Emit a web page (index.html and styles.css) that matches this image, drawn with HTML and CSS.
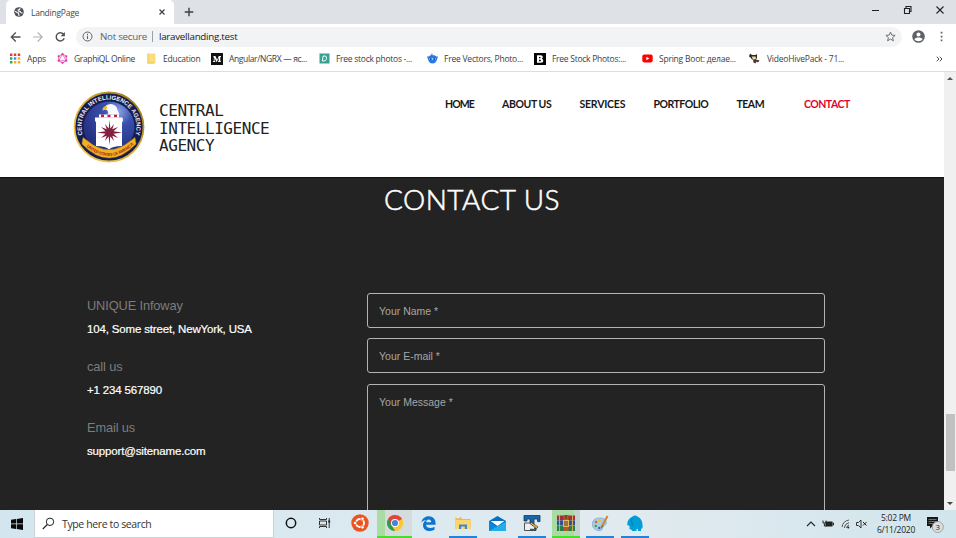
FILE: index.html
```html
<!DOCTYPE html>
<html lang="en">
<head>
<meta charset="utf-8">
<title>LandingPage</title>
<link rel="stylesheet" href="styles.css">
</head>
<body>
<div class="desktop">
  <div class="tabstrip">
    <div class="tab">
      <svg class="globe" width="10" height="10" viewBox="0 0 10 10"><circle cx="5" cy="5" r="4.8" fill="#4d5258"/><path d="M1.2 4.2 3 5.4 4.6 6v1.300L5.200 8.900 M6 1.200 5.600 2.600 4 3.100 4.400 4.100 6.200 4.400 7 5.800 8.700 6" fill="none" stroke="#fff" stroke-width="1.100"/></svg>
      <span class="tab-title">LandingPage</span>
      <svg class="tab-close" width="6" height="6" viewBox="0 0 6 6"><path d="M.5.5l5 5M5.500.500l-5 5" stroke="#3c4043" stroke-width="1.200"/></svg>
    </div>
    <svg class="newtab" width="10" height="10" viewBox="0 0 10 10"><path d="M5 .700v8.600M.700 5h8.600" stroke="#3c4043" stroke-width="1.400"/></svg>
    <svg class="winbtns" width="72" height="12" viewBox="0 0 72 12"><path d="M0 6.500h7" stroke="#222"/><path d="M32.500 4.500h5v5h-5zM34 4v-1.500h5v5h-1.500" fill="none" stroke="#222" stroke-width="1.100"/><path d="M64.500 2.500l7 7M71.500 2.500l-7 7" stroke="#222" stroke-width="1.100"/></svg>
  </div>
  <div class="toolbar">
    <svg class="navicons" width="60" height="12" viewBox="0 0 60 12"><path d="M10.500 6H1.500M5.800 1.500 1.300 6l4.500 4.500" fill="none" stroke="#4d5156" stroke-width="1.300"/><path d="M23 6h9M27.700 1.500 32.200 6l-4.500 4.500" fill="none" stroke="#aeb1b5" stroke-width="1.100"/><path d="M53.500 3.200A4.100 4.100 0 1 0 54.200 7.200" fill="none" stroke="#4d5156" stroke-width="1.400"/><path d="M54.900 1v4.300h-4.300z" fill="#4d5156"/></svg>
    <div class="address">
      <svg width="11" height="11" viewBox="0 0 11 11"><circle cx="5.500" cy="5.500" r="4.500" fill="none" stroke="#5f6368"/><path d="M5.500 4.700v3.300M5.500 2.800v1.100" stroke="#5f6368" stroke-width="1.100"/></svg>
      <span class="notsecure">Not secure</span><span class="sep"></span><span class="url">laravellanding.test</span>
      <svg class="star" width="11" height="11" viewBox="0 0 11 11"><path d="M5.500 1.100 6.800 4.100l3.300.300-2.500 2.200.800 3.200-2.900-1.700-2.900 1.700.800-3.200L.900 4.400l3.300-.300z" fill="none" stroke="#5f6368" stroke-width=".9"/></svg>
    </div>
    <svg class="profile" width="13" height="13" viewBox="0 0 13 13"><circle cx="6.500" cy="6.500" r="6.300" fill="#5f6368"/><circle cx="6.500" cy="4.400" r="2" fill="#fff"/><path d="M2.500 9.500c.8-2.600 7.200-2.600 8 0-1.800 2.200-6.200 2.200-8 0z" fill="#fff"/></svg>
    <svg class="dots" width="3" height="11" viewBox="0 0 3 11"><path d="M.700.800h1.700v1.700H.700zM.700 4.700h1.700v1.700H.700zM.700 8.600h1.700v1.700H.700z" fill="#5f6368"/></svg>
  </div>
  <div class="bookmarks">
    <span class="bm apps"><svg width="11" height="11" viewBox="0 0 11 11"><path d="M0 .500h2.400v2.400H0zM3.900.500h2.400v2.400H3.900zM7.800.500h2.400v2.400H7.800z" fill="#e33b2e"/><path d="M0 4.300h2.400v2.400H0zM0 8.100h2.400v2.400H0z" fill="#2da94f"/><path d="M3.900 4.300h2.400v2.400H3.900z" fill="#4285f4"/><path d="M3.900 8.100h2.400v2.400H3.900zM7.800 4.300h2.400v2.400H7.800zM7.800 8.100h2.400v2.400H7.800z" fill="#f5ae16"/></svg><b>Apps</b></span>
    <span class="bm graph"><svg width="11" height="11" viewBox="0 0 11 11"><path d="M5.500 1 9.300 3.200v4.600L5.500 10 1.700 7.800V3.200zM5.500 1 9.300 7.800H1.700z" fill="none" stroke="#e44bb0" stroke-width=".8"/><g fill="#e535ab"><circle cx="5.500" cy="1.200" r="1.100"/><circle cx="9.300" cy="3.300" r="1.100"/><circle cx="9.300" cy="7.700" r="1.100"/><circle cx="5.500" cy="9.800" r="1.100"/><circle cx="1.700" cy="7.700" r="1.100"/><circle cx="1.700" cy="3.300" r="1.100"/></g></svg><b>GraphiQL Online</b></span>
    <span class="bm edu"><svg width="11" height="11" viewBox="0 0 11 11"><path d="M1.500.500h8v10h-8z" fill="#fbdc7b"/><path d="M1.500.500v10h6.500v-1h-5.700v-9z" fill="#eac35b"/></svg><b>Education</b></span>
    <span class="bm ang"><svg width="12" height="12" viewBox="0 0 12 12"><path d="M0 0h12v12H0z" fill="#111"/><path d="M2.200 3h2.200L6.100 6.800 7.800 3h2.200v.700l-.700.600v3.600l.700.600V9H7v-.500l.700-.600V4.800L5.800 9h-.300L3.500 4.900v2.800l.900.900V9H1.900v-.400l.900-.900V4.200z" fill="#fff"/></svg><b>Angular/NGRX — яс...</b></span>
    <span class="bm stock"><svg width="11" height="11" viewBox="0 0 11 11"><rect x=".5" y=".5" width="10" height="10" fill="#35a292"/><path d="M4.200 3h1.800q2 .200 1.500 2.600T5 8H3.300z" fill="none" stroke="#fff" stroke-width="1"/></svg><b>Free stock photos -...</b></span>
    <span class="bm vec"><svg width="11" height="11" viewBox="0 0 11 11"><path d="M5 0l.700 2.200C7.500 2 8.700 2.600 9.200 3.500L11 3.500 9.800 7C9 9.500 7.500 10.500 5.500 10.500S2 9.500 1.200 7L0 3.500l1.800 0Q2.600 2.300 4 2.200z" fill="#2878e8"/><path d="M2.400 5.200h6.200v1.400H2.400z" fill="#d7edff"/><circle cx="3.800" cy="6" r=".9" fill="#123f90"/><circle cx="7.200" cy="6" r=".9" fill="#123f90"/></svg><b>Free Vectors, Photo...</b></span>
    <span class="bm bb"><svg width="12" height="12" viewBox="0 0 12 12"><path d="M0 0h12v12H0z" fill="#050505"/><path fill-rule="evenodd" d="M3 2.200h3.800q2 .100 2 1.800 0 1.200-1 1.700 1.500.500 1.500 2Q9.300 9.700 7 9.800H3zM5 3.900v1.300h1.300q.700-.600 0-1.300zM5 6.700v1.500h1.600q.800-.800 0-1.500z" fill="#fff"/></svg><b>Free Stock Photos:...</b></span>
    <span class="bm spring"><svg width="11" height="11" viewBox="0 0 11 11"><rect x=".3" y="1.600" width="10.400" height="7.800" rx="1.800" fill="#f00"/><path d="M4.300 3.700 7.300 5.500l-3 1.800z" fill="#fff"/></svg><b>Spring Boot: делае...</b></span>
    <span class="bm hive"><svg width="11" height="11" viewBox="0 0 11 11"><path d="M1 .500 3 2h3.500L8 1v4L6.500 7 3 6.500 1.500 4.500 0 3.500z" fill="#33271f"/><path d="M2.700 3.600 6.700 3.400 6.900 6 4 6.500z" fill="#efd7aa"/><path d="M4 7l3-.500L10.500 7.500 9 9.500 7.500 8.500 6.500 10.500 4.500 9.500z" fill="#49382a"/></svg><b>VideoHivePack - 71...</b></span>
    <svg class="more" width="7" height="6" viewBox="0 0 7 6"><path d="M.7.700 3 3 .700 5.300M3.700.700 6 3 3.700 5.300" fill="none" stroke="#4b4f54" stroke-width="1"/></svg>
  </div>

  <div class="viewport">
    <div class="page">
      <header class="site-header">
        <svg class="seal" width="72" height="72" viewBox="0 0 72 72">
          <defs><radialGradient id="blue" cx=".68" cy=".2" r=".8"><stop stop-color="#8fa3e6"/><stop offset=".35" stop-color="#3a50ad"/><stop offset="1" stop-color="#222e7d"/></radialGradient>
          <linearGradient id="gold" x1="1" y1="0" x2="0" y2="1"><stop stop-color="#8b6f1d"/><stop offset=".5" stop-color="#e0af36"/><stop offset="1" stop-color="#f8cf56"/></linearGradient>
          <path id="arc" d="M11.500 48.500A27.500 27.500 0 1 1 60.500 48.500"/><path id="low" d="M12 54Q36 76 60 54"/></defs>
          <circle cx="36" cy="36" r="34.500" fill="#151d50" stroke="url(#gold)" stroke-width="1.800"/>
          <circle cx="36" cy="36" r="25.500" fill="url(#blue)"/>
          <text class="seal-text"><textPath href="#arc" textLength="102" startOffset="5">CENTRAL INTELLIGENCE AGENCY</textPath></text>
          <path d="M22 26.500h27.500l.5 3-1 2V55q-10 .400-13 3.500-3-3.100-13-3.500V31.500l-1-2z" fill="#fff"/>
          <path d="M26 23.500h20v3H26z" fill="#fff"/><path d="M28 23.500h3v2.500h-3zM34.500 23.500h3v2.500h-3zM41 23.500h3v2.500h-3z" fill="#c12032"/>
          <path d="M31 18q1.500-4.800 6.500-5 6 .500 7 6l2 4.500H34q2-2 .500-4-2.500-2-5 .500z" fill="#f7f9ff"/><path d="M29.500 18.500q.5-3.300 4-3.700l1 3.200q-3-.8-4.500 1.800z" fill="#edbd25"/>
          <path d="M36.500 29 37.300 37.500 41 33 39.300 38.300 45 36 40.500 40.200 49 41.500 40.500 42.800 45 47 39.300 44.700 41 50 37.300 45.500 36.500 54 35.700 45.500 32 50 33.700 44.700 28 47 32.500 42.800 24 41.500 32.500 40.200 28 36 33.700 38.300 32 33 35.700 37.500z" fill="#84203f"/>
          <path d="M10 46.500 14 49.500Q36 68 58 49.500l4-3 1 6.500Q36 81 9 53z" fill="#efb322" stroke="#c7801b" stroke-width=".5"/>
          <text class="ribbon"><textPath href="#low" startOffset="2" textLength="53">UNITED STATES OF AMERICA</textPath></text>
        </svg>
        <div class="agency"><span>CENTRAL</span><span>INTELLIGENCE</span><span>AGENCY</span></div>
        <nav class="menu"><a class="m1">HOME</a><a class="m2">ABOUT US</a><a class="m3">SERVICES</a><a class="m4">PORTFOLIO</a><a class="m5">TEAM</a><a class="m6">CONTACT</a></nav>
      </header>
      <main class="contact">
        <h1>CONTACT US</h1>
        <div class="columns">
          <dl class="details">
            <dt>UNIQUE Infoway</dt><dd>104, Some street, NewYork, USA</dd>
            <dt>call us</dt><dd>+1 234 567890</dd>
            <dt>Email us</dt><dd>support@sitename.com</dd>
          </dl>
          <form class="form"><div class="field">Your Name *</div><div class="field">Your E-mail *</div><div class="field message">Your Message *</div></form>
        </div>
      </main>
    </div>
    <div class="scrollbar"><i class="up"></i><div class="thumb"></div><i class="down"></i></div>
  </div>

  <footer class="taskbar">
    <div class="start"><svg width="12" height="12" viewBox="0 0 12 12"><path d="M0 1.700 5 1v4.600H0zM5.700.900 12 0v5.600H5.700zM0 6.300h5V11L0 10.300zM5.700 6.300H12V12l-6.300-.9z" fill="#080808"/></svg></div>
    <div class="search"><svg width="13" height="13" viewBox="0 0 13 13"><circle cx="8" cy="4.800" r="3.700" fill="none" stroke="#222"/><path d="M5.300 7.500.800 12" stroke="#222" stroke-width="1.100"/></svg><span>Type here to search</span></div>
    <div class="slot"><svg width="12" height="12" viewBox="0 0 12 12"><circle cx="6" cy="6" r="4.700" fill="none" stroke="#111" stroke-width="1.500"/></svg></div>
    <div class="slot"><svg width="12" height="12" viewBox="0 0 12 12"><path d="M.500 1v1.500h7V1M.500 11V9.500h7V11M.500 4h7v4h-7zM10.200 1v10" fill="none" stroke="#333"/><path d="M9.200 3.500h2v2h-2z" fill="#222"/></svg></div>
    <div class="slot ubuntu"><svg width="18" height="18" viewBox="0 0 18 18"><circle cx="9" cy="9" r="8.700" fill="#e95420"/><circle cx="9" cy="9" r="4" fill="none" stroke="#fff" stroke-width="1.900"/><g fill="#fff" stroke="#e95420" stroke-width=".8"><circle cx="4.100" cy="9" r="1.700"/><circle cx="11.500" cy="4.700" r="1.700"/><circle cx="11.500" cy="13.300" r="1.700"/></g></svg></div>
    <div class="slot active chrome"><svg width="16" height="16" viewBox="0 0 16 16"><path d="M8 8 1.070 4A8 8 0 0 1 14.930 4z" fill="#e34435"/><path d="M8 8 14.930 4A8 8 0 0 1 8 16z" fill="#f8c72d"/><path d="M8 8v8A8 8 0 0 1 1.070 4z" fill="#2c9c52"/><path d="M8 4h6.930L15.500 5.500 11.500 10 8 16 4.500 10z" fill="#f8c72d"/><path d="M8 8 4.500 10 1.070 4 8 4h7L11.500 6z" fill="#e34435"/><circle cx="8" cy="8" r="4" fill="#fff"/><circle cx="8" cy="8" r="3.100" fill="#4285db"/></svg></div>
    <div class="slot"><svg width="15" height="15" viewBox="0 0 15 15"><path d="M.300 6.800C1 2.500 4 .200 7.800.200c4.200 0 6.800 3 6.800 7v1.500H5c.3 3.500 5 4.200 8.500 2v3C8 16.500 2 14.500 2 9.200c0-2.600 1.500-4.300 3.500-5.100C3.200 4.200 1.500 5.200.300 6.800zM5.100 6.200h5.100c0-3.900-4.800-3.600-5.100 0z" fill="#0c76cf"/></svg></div>
    <div class="slot run"><svg width="16" height="14" viewBox="0 0 16 14"><path d="M.500 1h5l1.500 2h8.500v10H.500z" fill="#efb943"/><path d="M1 4h14.500v9H1z" fill="#fcd66e"/><path d="M4 13V8.500h8V13H9.800v-2.500H6.200V13z" fill="#3989d4"/><path d="M1.500 1.700h3" stroke="#fff"/></svg></div>
    <div class="slot"><svg width="17" height="15" viewBox="0 0 17 15"><path d="M0 5 8.500 0 17 5v10H0z" fill="#0870c3"/><path d="M0 5.500 8.500 11 0 15z" fill="#0b86dc"/><path d="M17 5.500V15H0z" fill="#23aeea"/><path d="M1.500 5h14L8.500 10z" fill="#fff"/></svg></div>
    <div class="slot run"><svg width="18" height="17" viewBox="0 0 18 17"><path d="M1 .500h16v6h-2.500V4H11v9h2v2.500H5V13h2V4H4v2H1z" fill="#1767aa" stroke="#183652" stroke-width=".8"/><path d="M1.500 8h5l6 4-2 2.500-3-.500v1.500h-6z" fill="#eee" stroke="#444" stroke-width=".9"/><path d="M8 7l7 5-1.500 1.700L7 8.500z" fill="#efad4c" stroke="#222" stroke-width=".6"/></svg></div>
    <div class="slot active rar"><svg width="18" height="16" viewBox="0 0 18 16"><path d="M0 .500h18V5H0z" fill="#a52b39"/><path d="M0 5.300h18v5H0z" fill="#31509b"/><path d="M0 10.700h18V16H0z" fill="#267d49"/><path d="M2.500 0v16M15.500 0v16" stroke="#d2aa55" stroke-width="1.100"/><path d="M6.500 0h5v16h-5z" fill="#ae5c2a"/><path d="M6 5h6v7H6z" fill="#edb45b"/><path d="M8 6v5M10 6v5M9 0v4" stroke="#433" stroke-width="1"/></svg></div>
    <div class="slot run"><svg width="17" height="17" viewBox="0 0 17 17"><path d="M8 3C3 2.500 0 6 .300 9.500c.4 4.600 4.700 6.500 8 6 3-.5 1.200-3 3.300-4.300C14 10 15 8.500 14 6c-.8-2-3-3-6-3z" fill="#a8cce4" stroke="#739bb8" stroke-width=".6"/><circle cx="4" cy="7" r="1.300" fill="#e35d43"/><circle cx="3.800" cy="11" r="1.300" fill="#4c9e53"/><circle cx="7.500" cy="5.200" r="1.300" fill="#f0c13e"/><circle cx="7.200" cy="13" r="1.200" fill="#3766b6"/><path d="M15.500 1 9 13" stroke="#c98739" stroke-width="2"/><path d="m10.500 10-2 4 3-2.500z" fill="#775"/></svg></div>
    <div class="slot run"><svg width="16" height="17" viewBox="0 0 16 17"><path d="M5.500 1.500q2.500-2.200 5 0C14.500 3.500 16 7 15.500 13l-1.500 1V16h-3v-2H9.500V16h-4L4 14.500 2.500 14V11L.300 10Q0 4 5.500 1.500z" fill="#009fd9"/><path d="M5 6.500 5.200 11M5.500 3q-2.500 3 0 5.500" stroke="#08739f" fill="none" stroke-width=".7"/></svg></div>
    <div class="tray">
      <svg width="62" height="14" viewBox="0 0 62 14"><path d="M1 9 5 5l4 4" fill="none" stroke="#222" stroke-width="1.100"/><path d="M19.500 4.500h7v5h-7z" fill="#222"/><path d="M26.500 6h1v2h-1M17 3.500v2.500h3V3.500M18.400 6.500V9h2" fill="none" stroke="#222" stroke-width="1"/><path d="M36 10Q37 4 43 3M38.200 11Q39 6.500 43 5.700M40.500 11Q41 8.500 43 8" fill="none" stroke="#555" stroke-width="1"/><circle cx="42.300" cy="10.600" r="1" fill="#222"/><path d="M50.500 5.500h2L55 3v8L52.500 8.500h-2z" fill="none" stroke="#222" stroke-width=".9"/><path d="m57 5 3.500 3.500M60.500 5 57 8.500" stroke="#222"/></svg>
      <div class="clock"><span>5:02 PM</span><span>6/11/2020</span></div>
      <svg class="notif" width="19" height="20" viewBox="0 0 19 20"><path d="M1 3h11v9H6.500L4 14.500V12H1z" fill="#171717"/><path d="M2.500 5.500h8M2.500 7.500h8M2.500 9.500h5" stroke="#8d989c" stroke-width=".7"/><circle cx="11.800" cy="13" r="5.500" fill="#dcdfe2" stroke="#8b959c" stroke-width=".8"/><text class="badge" x="11.800" y="16">3</text></svg>
    </div>
  </footer>
</div>
</body>
</html>
```

FILE: styles.css
```css
* { box-sizing: border-box; }
body { margin: 0; }
.desktop { width: 956px; height: 538px; display: flex; flex-direction: column; overflow: hidden; font-family: "Open Sans", sans-serif; background: #fff; }
svg { display: block; flex: none; }

.tabstrip { height: 24px; flex: none; display: flex; align-items: flex-start; background: #dee1e6; }
.tab { width: 168px; height: 24px; margin-left: 6px; padding: 0 9px 0 8px; display: flex; align-items: center; background: #fff; border-radius: 5px 5px 0 0; }
.tab-title { margin-left: 7px; font-size: 8.5px; letter-spacing: -.25px; color: #45494d; white-space: nowrap; }
.tab-close { margin-left: auto; }
.newtab { margin: 7px 0 0 10px; }
.winbtns { margin: 4px 12px 0 auto; }

.toolbar { height: 25px; flex: none; display: flex; align-items: center; }
.navicons { margin-left: 10px; }
.address { width: 826px; height: 20px; margin-left: 6px; padding: 0 6px 0 6px; border-radius: 10px; background: #f1f3f4; display: flex; align-items: center; font-size: 9.8px; white-space: nowrap; }
.notsecure { width: 47px; margin-left: 7px; color: #5f6368; letter-spacing: -.28px; }
.sep { width: 1px; height: 11px; margin: 0 6px 0 5px; background: #9aa0a6; }
.url { color: #202124; letter-spacing: -.28px; }
.star { margin-left: auto; }
.profile { margin-left: 10px; }
.dots { margin-left: 15px; }

.bookmarks { height: 23px; flex: none; padding: 0 0 3px 10px; display: grid; grid-template-columns: 47px 89px 65px 108px 108px 107px 108px 107px 187px 10px; align-items: center; border-bottom: 1px solid #dcdddf; }
.bm { display: flex; align-items: center; gap: 6px; white-space: nowrap; }
.bm b { font-weight: 400; font-size: 8.5px; line-height: 12px; letter-spacing: -.22px; color: #3c4043; }
.graph b { letter-spacing: -.36px; }
.ang b { letter-spacing: -.36px; }
.stock b, .bb b { letter-spacing: -.27px; }
.hive b { margin-left: 1px; }

.viewport { height: 438px; flex: none; display: flex; }
.page { width: 944px; display: flex; flex-direction: column; overflow: hidden; }
.site-header { height: 105px; flex: none; display: flex; align-items: flex-start; background: #fff; }
.seal { margin: 19px 0 0 73px; }
.seal-text { font: 700 6px "Liberation Sans", sans-serif; fill: #eef0fa; }
.ribbon { font: 700 4.2px "Liberation Sans", sans-serif; fill: #a72720; }
.agency { width: 130px; margin: 30px 0 0 14px; display: flex; flex-direction: column; font: 16px/17.500px "DejaVu Sans Mono", monospace; letter-spacing: -.44px; color: #222; }
.menu { margin: 24px 0 0 156px; display: grid; grid-template-columns: 57px 77.500px 74px 83px 67.500px 60px; font: 700 10.500px/16px Lato, sans-serif; letter-spacing: -.5px; color: #171717; white-space: nowrap; }
.m1 { letter-spacing: -.9px; }
.m2 { letter-spacing: -.4px; }
.m3 { letter-spacing: -.22px; }
.menu .m6 { color: #e4032e; }

.contact { flex: 1; background: #232323; border-top: 1px solid #111; }
.contact h1 { margin: 4px 0 0; height: 36px; text-align: center; font: 300 28px/34px Lato, sans-serif; letter-spacing: .45px; -webkit-text-stroke: .55px #fff; color: #fff; }
.columns { margin-top: 74px; padding-left: 87px; display: grid; grid-template-columns: 280px 458px; }
.details { margin: 5px 0 0; font-family: "Liberation Sans", sans-serif; white-space: nowrap; }
.details dt { height: 18px; font-size: 12.800px; line-height: 18px; letter-spacing: -.12px; color: #7d7d7d; }
.details dd { margin: 6px 0 20px; height: 17px; font-size: 11.500px; line-height: 17px; letter-spacing: -.16px; color: #fff; -webkit-text-stroke: .2px #fff; }
.form { display: flex; flex-direction: column; gap: 10.4px; padding-top: .8px; }
.field { height: 35px; padding: 0 11px; border: 1px solid #b4b4b4; border-radius: 3px; font: 10.500px/34px "Liberation Sans", sans-serif; color: #a6a6a6; }
.message { height: 150px; }

.scrollbar { width: 12px; display: flex; flex-direction: column; align-items: center; background: #f0f0f0; }
.up, .down { border: 3px solid transparent; }
.up { margin-top: 2px; border-bottom-color: #555; }
.thumb { width: 9px; height: 57px; margin-top: 334px; background: #c1c1c1; }
.down { margin-top: 31px; border-top-color: #444; }

.taskbar { height: 28px; flex: none; display: flex; background: linear-gradient(90deg, #d3e6ef, #dceaf0 45%, #e1eaef 65%, #d2e5ed); }
.start { width: 34px; padding: 8px 0 0 11px; }
.search { width: 240px; display: flex; align-items: center; padding-left: 7px; background: #fff; border: 1px solid #cbd2d6; border-top: 0; font-size: 10.500px; color: #333; white-space: nowrap; }
.search span { margin: 1px 0 0 7px; letter-spacing: -.38px; }
.slot { width: 34.300px; display: flex; align-items: center; justify-content: center; border-bottom: 2px solid transparent; }
.ubuntu { margin-left: .6px; }
.run { width: 28px; margin: 0 3.150px; border-bottom-color: #2383d9; }
.active { border-bottom-color: #45df2b; background: linear-gradient(90deg, #a8dca2 24%, #d4dcdd 24%); }
.rar { width: 28px; margin: 0 3.150px; background: linear-gradient(90deg, #a8dca2 80%, #c5d2d2 80%); }
.tray { margin-left: auto; display: flex; align-items: center; }
.clock { width: 48px; margin-left: 4px; display: flex; flex-direction: column; align-items: center; font-size: 8.500px; line-height: 12.500px; letter-spacing: -.25px; color: #222; white-space: nowrap; }
.notif { margin: 0 11px 0 6px; }
.badge { font: 8px "Open Sans", sans-serif; text-anchor: middle; fill: #222; }
```
